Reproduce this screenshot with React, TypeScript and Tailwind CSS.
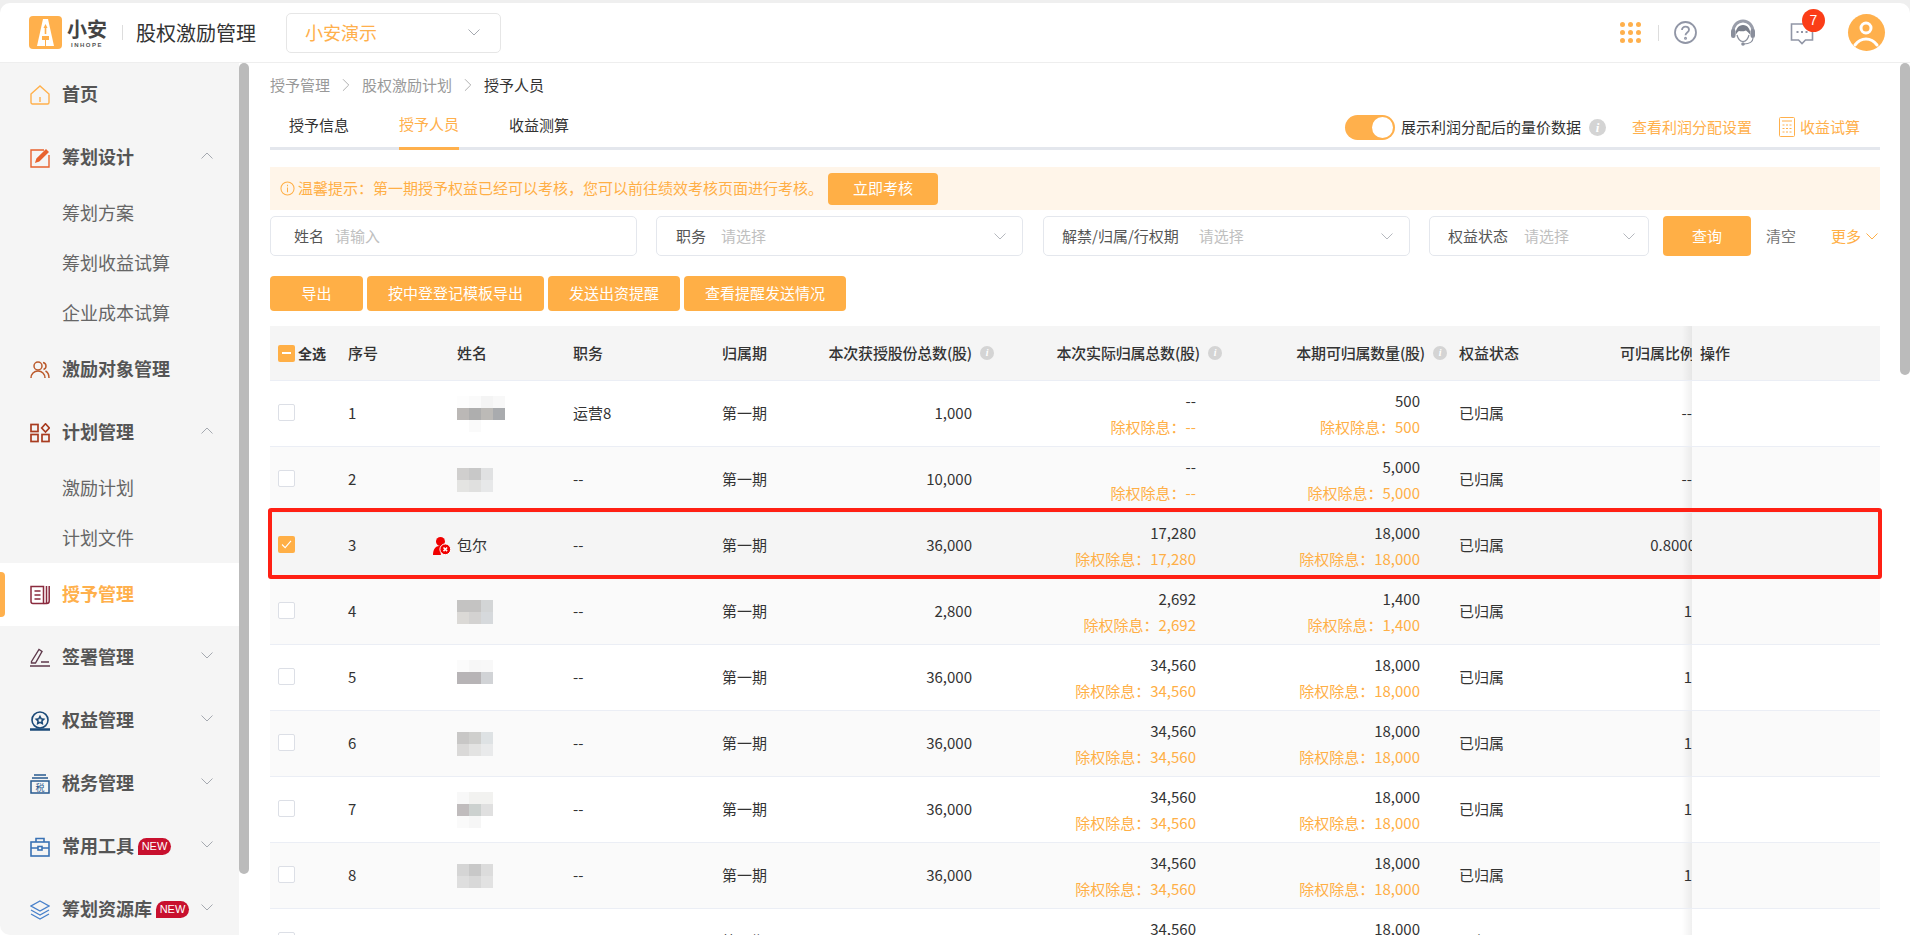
import { ChevronRight } from 'lucide-react';

const Chev = ({ up = false, className = 'text-[#a5a9b0]' }: { up?: boolean; className?: string }) => (
  <svg viewBox="0 0 12 7" className={`w-[12px] h-[7px] shrink-0 ${up ? 'rotate-180' : ''} ${className}`} fill="none" stroke="currentColor" strokeWidth="1">
    <polyline points="0.5,0.5 6,6 11.5,0.5" />
  </svg>
);

const Info = () => (
  <span className="w-[14px] h-[14px] rounded-full bg-[#d4d4d4] text-white text-[10px] leading-[14px] text-center italic font-bold shrink-0 ml-[8px] font-['Liberation_Serif',serif]">i</span>
);

const icons: Record<string, React.ReactNode> = {
  home: (
    <svg viewBox="0 0 20 20" className="w-[20px] h-[20px]" fill="none" stroke="#ffb04c" strokeWidth="1.4">
      <path d="M1 9 10 1l9 8v8.5a1.500 1.500 0 0 1-1.500 1.500h-15A1.500 1.500 0 0 1 1 17.500z" />
      <path d="M10 12v5" />
    </svg>
  ),
  plan: (
    <svg viewBox="0 0 20 20" className="w-[20px] h-[20px]" fill="none" stroke="#e8622e" strokeWidth="1.4">
      <path d="M14 2H1v17h18V7" />
      <path d="M6 14l1-3 9-9 2 2-9 9z" fill="#e8622e" />
    </svg>
  ),
  people: (
    <svg viewBox="0 0 20 20" className="w-[20px] h-[20px]" fill="none" stroke="#bb5a2c" strokeWidth="1.5">
      <circle cx="8" cy="6" r="4" />
      <path d="M1 18c0-4 3-7 7-7s7 3 7 7" />
      <path d="M13 2.500c2 .5 3 2 3 3.500s-1 3-2.500 3.500M15.500 11c2 1 3.500 3.500 3.500 7" />
    </svg>
  ),
  grid: (
    <svg viewBox="0 0 20 20" className="w-[20px] h-[20px]" fill="none" stroke="#a93c20" strokeWidth="1.7">
      <rect x="1" y="1.500" width="7" height="7" />
      <rect x="1" y="11.500" width="7" height="7" />
      <rect x="12" y="11.500" width="7" height="7" />
      <path d="M15.500 .8 19.300 5l-3.800 4L11.700 5z" />
    </svg>
  ),
  book: (
    <svg viewBox="0 0 20 20" className="w-[20px] h-[20px]" fill="none" stroke="#8a2b3e" strokeWidth="1.5">
      <path d="M1 1.500h12.500v17H3a2 2 0 0 1-2-2z" />
      <path d="M16.500 1v17M19.200 1v15c0 1.500-1 2.500-2.500 2.500h-3M4.500 6h6M4.500 10h6M4.500 14h6" />
    </svg>
  ),
  sign: (
    <svg viewBox="0 0 20 20" className="w-[20px] h-[20px]" fill="none" stroke="#5f3a4c" strokeWidth="1.4">
      <path d="M1.500 13.500 9 1.500l3 2-6.500 11.500H1.500zM11 14h8M0 18h20" />
    </svg>
  ),
  badge: (
    <svg viewBox="0 0 20 20" className="w-[20px] h-[20px]" fill="none" stroke="#1b4a78" strokeWidth="1.6">
      <circle cx="10" cy="9" r="8" />
      <path d="M10 5.500l1.200 2.300 2.500.4-1.800 1.800.4 2.500-2.300-1.200-2.300 1.200.4-2.500-1.800-1.800 2.500-.4z" />
      <path d="M0 18.500h20" strokeWidth="2.500" />
    </svg>
  ),
  tax: (
    <svg viewBox="0 0 20 20" className="w-[20px] h-[20px]" fill="none" stroke="#27598f" strokeWidth="1.5">
      <path d="M4 1h12M2 4h16" />
      <rect x="1" y="7" width="18" height="12" />
      <text x="10" y="17" textAnchor="middle" fontSize="9" fill="#27598f" stroke="none">税</text>
    </svg>
  ),
  tool: (
    <svg viewBox="0 0 20 20" className="w-[20px] h-[20px]" fill="none" stroke="#3a72b5" strokeWidth="1.6">
      <rect x="1" y="5" width="18" height="14" />
      <path d="M6 5V1.500h8V5M1 11h18" />
      <rect x="8" y="9.500" width="4" height="3.500" fill="#fff" />
    </svg>
  ),
  layer: (
    <svg viewBox="0 0 20 20" className="w-[20px] h-[20px]" fill="none" stroke="#4a82cb" strokeWidth="1.4">
      <path d="M10 1 19 6l-9 5-9-5zM1 10l9 5 9-5M1 14l9 5 9-5" />
    </svg>
  ),
};

type NavItem = { label: string; icon: string; open?: boolean; closed?: boolean; isNew?: boolean; active?: boolean; subs?: string[]; subClass?: string };

const nav: NavItem[] = [
  { label: '首页', icon: 'home' },
  { label: '筹划设计', icon: 'plan', open: true, subs: ['筹划方案', '筹划收益试算', '企业成本试算'], subClass: 'h-[149px]' },
  { label: '激励对象管理', icon: 'people' },
  { label: '计划管理', icon: 'grid', open: true, subs: ['激励计划', '计划文件'], subClass: 'h-[99px]' },
  { label: '授予管理', icon: 'book', active: true },
  { label: '签署管理', icon: 'sign', closed: true },
  { label: '权益管理', icon: 'badge', closed: true },
  { label: '税务管理', icon: 'tax', closed: true },
  { label: '常用工具', icon: 'tool', closed: true, isNew: true },
  { label: '筹划资源库', icon: 'layer', closed: true, isNew: true },
];

const Sidebar = () => (
  <aside className="w-[250px] shrink-0 flex bg-white overflow-hidden">
    <nav className="w-[239px] shrink-0 bg-[#f5f5f5] rounded-bl-[10px] overflow-hidden">
      {nav.map((item) => (
        <div key={item.label}>
          <div className={`relative h-[63px] flex items-center pl-[30px] ${item.active ? 'bg-white' : ''}`}>
            {item.active && <span className="absolute left-0 top-[9px] w-[5px] h-[45px] bg-[#ffb04c] rounded-r-[4px]" />}
            {icons[item.icon]}
            <span className={`ml-[12px] pb-[2px] text-[18px] font-bold whitespace-nowrap ${item.active ? 'text-[#ffb04c]' : 'text-[#555]'}`}>{item.label}</span>
            {item.isNew && (
              <span className="ml-[4px] w-[33px] h-[17px] rounded-t-[9px] rounded-br-[9px] bg-[#c8102e] text-white text-[11px] leading-[17px] text-center font-['Liberation_Sans',sans-serif]">NEW</span>
            )}
            {(item.open || item.closed) && (
              <span className="absolute left-[201px] pb-[4px]">
                <Chev up={item.open} />
              </span>
            )}
          </div>
          {item.subs && (
            <div className={`flex flex-col ${item.subClass}`}>
              {item.subs.map((s) => (
                <div key={s} className="flex-1 flex items-center pl-[62px] pb-[2px] text-[18px] text-[#666]">{s}</div>
              ))}
            </div>
          )}
        </div>
      ))}
    </nav>
    <div className="w-[10px] shrink-0 bg-white">
      <div className="h-[811px] bg-[#bbb] rounded-[5px]" />
    </div>
  </aside>
);

const Header = () => (
  <header className="h-[60px] shrink-0 flex items-center bg-white rounded-t-[10px] border-b border-[#eee]">
    <svg viewBox="0 0 33 33" className="ml-[29px] w-[33px] h-[33px] shrink-0">
      <rect width="33" height="33" rx="4" fill="#ffb04c" />
      <path d="M14 3h5l6 27H8z" fill="#fff" />
      <path d="M16.500 8l2 4h-1.200v6h-1.600v-6h-1.200zM13 20h7v4h-7z" fill="#ffb04c" />
      <path d="M16 24h1v6h-1z" fill="#ffb04c" />
    </svg>
    <div className="ml-[5px] w-[40px] flex flex-col items-center text-[#444]">
      <span className="text-[20px] font-bold leading-[24px] whitespace-nowrap">小安</span>
      <span className="text-[6px] leading-[8px] tracking-[1.5px] font-bold text-[#555] font-['Liberation_Sans',sans-serif]">INHOPE</span>
    </div>
    <span className="ml-[15px] w-px h-[15px] bg-[#ddd]" />
    <span className="ml-[13px] text-[20px] text-[#333] whitespace-nowrap">股权激励管理</span>
    <div className="ml-[30px] w-[215px] h-[40px] border border-[#e6e6e6] rounded-[5px] flex items-center pl-[18px] pr-[20px] justify-between">
      <span className="text-[18px] text-[#ffb04c]">小安演示</span>
      <Chev />
    </div>
    <div className="ml-auto flex items-center">
      <div className="grid grid-cols-3 gap-[3px]">
        {Array.from({ length: 9 }).map((_, i) => (
          <span key={i} className="w-[5px] h-[5px] rounded-full bg-[#ffb04c]" />
        ))}
      </div>
      <span className="ml-[17px] w-px h-[16px] bg-[#ddd]" />
      <svg viewBox="0 0 23 23" className="ml-[15px] w-[23px] h-[23px]" fill="none" stroke="#9196a6" strokeWidth="1.8">
        <circle cx="11.500" cy="11.500" r="10.500" />
        <path d="M8 9c0-2 1.500-3.300 3.500-3.300s3.500 1.300 3.500 3c0 2.800-3.500 2.800-3.500 5.600" />
        <circle cx="11.500" cy="17.300" r=".6" />
      </svg>
      <svg viewBox="0 0 26 28" className="ml-[33px] w-[26px] h-[28px]" fill="none">
        <path d="M3 13C3 6.500 7.500 2 13 2s10 4.500 10 11" stroke="#9a9eaa" strokeWidth="3" />
        <path d="M5.500 16c0-6 3-10 7.500-10s7.500 4 7.500 10c-1.500-2-3-3.500-4.500-4.500-2 1-5.500 1-7 .5-1.500 1-2.500 2.500-3.500 4z" fill="#7a7f8b" />
        <path d="M7 16c1 4 3.500 6.500 6 6.500s5-2.500 6-6.500" stroke="#8a8f9c" strokeWidth="1.200" />
        <rect x="1" y="10" width="4.500" height="9" rx="2.200" fill="#8a8f9c" />
        <rect x="20.500" y="10" width="4.500" height="9" rx="2.200" fill="#8a8f9c" />
        <path d="M23 19c0 3.500-3.500 6-9 6" stroke="#8a8f9c" strokeWidth="1.200" />
        <circle cx="13" cy="25" r="1.800" fill="#8a8f9c" />
      </svg>
      <div className="relative ml-[34px] w-[24px] h-[24px]">
        <svg viewBox="0 0 24 24" className="w-[24px] h-[24px]" fill="none" stroke="#9196a6" strokeWidth="1.600">
          <path d="M1.500 3h21v16h-7l-3.500 3.500L8.500 19h-7z" />
          <path d="M6.500 11h2M11 11h2M15.500 11h2" strokeWidth="2" />
        </svg>
        <span className="absolute -top-[12px] left-[12px] w-[23px] h-[23px] rounded-full bg-[#fb3d17] text-white text-[14px] leading-[23px] text-center font-['Liberation_Sans',sans-serif]">7</span>
      </div>
      <div className="ml-[34px] mr-[25px] w-[37px] h-[37px] rounded-full bg-[#ffb04c] overflow-hidden">
        <svg viewBox="0 0 37 37" className="w-[37px] h-[37px]" fill="none" stroke="#fff" strokeWidth="3">
          <circle cx="18" cy="14" r="5" />
          <path d="M7 31c3-4 7-6 11-6s8 2 11 6" strokeLinecap="round" />
        </svg>
      </div>
    </div>
  </header>
);

const ActionBtn = ({ children, className }: { children: string; className: string }) => (
  <button className={`h-[35px] bg-[#ffaf46] rounded-[4px] text-white text-[15px] ${className}`}>{children}</button>
);

const Field = ({ label, value, className, labelClass, select = true }: { label: string; value: string; className: string; labelClass: string; select?: boolean }) => (
  <div className={`h-[40px] border border-[#e4e7ed] rounded-[5px] flex items-center text-[15px] ${className}`}>
    <span className={`text-[#555] whitespace-nowrap ${labelClass}`}>{label}</span>
    <span className="text-[#c0c0c0]">{value}</span>
    {select && <span className="ml-auto"><Chev className="text-[#b5b8be]" /></span>}
  </div>
);

const cols = 'grid grid-cols-[78px_109px_116px_149px_100px_180px_229px_219px_160px_82px_188px]';

type Row = { no: number; job: string; total: string; actual: string; can: string; ratio: string; mosaic: string[][]; name?: string };

const rows: Row[] = [
  { no: 1, job: '运营8', total: '1,000', actual: '--', can: '500', ratio: '--', mosaic: [['bg-[#fdfdfd]', 'bg-[#fafafa]', 'bg-[#f4f4f4]', 'bg-[#f8f8f8]'], ['bg-[#bbb8b6]', 'bg-[#aeaeae]', 'bg-[#bcbab7]', 'bg-[#a9abae]'], ['bg-white', 'bg-[#fafafa]', 'bg-white', 'bg-white']] },
  { no: 2, job: '--', total: '10,000', actual: '--', can: '5,000', ratio: '--', mosaic: [['bg-[#d0cfce]', 'bg-[#c8c8c8]', 'bg-[#e0e1e2]'], ['bg-[#e4e4e2]', 'bg-[#e0e0df]', 'bg-[#e7e8e9]']] },
  { no: 3, job: '--', total: '36,000', actual: '17,280', can: '18,000', ratio: '0.8000', mosaic: [], name: '包尔' },
  { no: 4, job: '--', total: '2,800', actual: '2,692', can: '1,400', ratio: '1', mosaic: [['bg-[#c4c3c2]', 'bg-[#c4c3c2]', 'bg-[#d3d5d6]'], ['bg-[#dbd9d6]', 'bg-[#d3d2d1]', 'bg-[#d6d9dc]']] },
  { no: 5, job: '--', total: '36,000', actual: '34,560', can: '18,000', ratio: '1', mosaic: [['bg-[#fbfbfb]', 'bg-[#f7f7f7]', 'bg-[#f8f8f8]'], ['bg-[#b7b4b6]', 'bg-[#b7b4b6]', 'bg-[#d1d3d6]'], ['bg-white', 'bg-white', 'bg-white']] },
  { no: 6, job: '--', total: '36,000', actual: '34,560', can: '18,000', ratio: '1', mosaic: [['bg-[#c8c7c6]', 'bg-[#cfcfcd]', 'bg-[#dee2e4]'], ['bg-[#dad9d8]', 'bg-[#e3e3e2]', 'bg-[#e9eaeb]']] },
  { no: 7, job: '--', total: '36,000', actual: '34,560', can: '18,000', ratio: '1', mosaic: [['bg-[#f8f8f8]', 'bg-[#f2f2f0]', 'bg-[#f2f2f0]'], ['bg-[#c0bcbd]', 'bg-[#ccd1cf]', 'bg-[#e0e0e0]'], ['bg-[#fafafa]', 'bg-[#f6f6f6]', 'bg-white']] },
  { no: 8, job: '--', total: '36,000', actual: '34,560', can: '18,000', ratio: '1', mosaic: [['bg-[#d5d5d5]', 'bg-[#c8c8c8]', 'bg-[#dcdcdc]'], ['bg-[#dedede]', 'bg-[#d8d8d8]', 'bg-[#e2e2e2]']] },
  { no: 9, job: '--', total: '36,000', actual: '34,560', can: '18,000', ratio: '1', mosaic: [] },
];

const Box = ({ mode }: { mode?: 'checked' | 'half' }) => (
  <span className={`w-[17px] h-[17px] rounded-[2px] flex items-center justify-center shrink-0 ${mode ? 'bg-[#ffaf46]' : 'bg-white border border-[#dcdfe6]'}`}>
    {mode === 'half' && <span className="w-[9px] h-[2px] bg-white" />}
    {mode === 'checked' && (
      <svg viewBox="0 0 12 10" className="w-[11px] h-[9px]" fill="none" stroke="#fff" strokeWidth="1.200">
        <path d="M1 5l3.500 3.500L11 1" />
      </svg>
    )}
  </span>
);

const Amount = ({ value, className }: { value: string; className: string }) => (
  <div className={`flex flex-col justify-center text-right leading-[26px] ${className}`}>
    <span className="text-[#333]">{value}</span>
    <span className="text-[#ffaf46]">除权除息：{value}</span>
  </div>
);

const HeadCell = ({ children, className }: { children: string; className: string }) => (
  <div className={`flex items-center justify-end whitespace-nowrap tracking-[-0.2px] ${className}`}>
    {children}
    <Info />
  </div>
);

// fixed 操作 column: fade drawn just left of its edge, over the column it covers
const FixedCell = ({ children }: { children?: string }) => (
  <div className="relative flex items-center pl-[8px]">
    <span className="absolute right-full top-0 bottom-0 w-[10px] bg-gradient-to-l from-black/[0.06] to-transparent" />
    {children}
  </div>
);

const Table = () => (
  <div className="mt-[15px] text-[15px] text-[#333]">
    <div className={`${cols} h-[55px] bg-[#f5f5f5] border-b border-[#ebeef5] font-medium`}>
      <div className="flex items-center pl-[8px]">
        <Box mode="half" />
        <span className="ml-[3px] text-[14px] font-bold">全选</span>
      </div>
      <div className="flex items-center">序号</div>
      <div className="flex items-center">姓名</div>
      <div className="flex items-center">职务</div>
      <div className="flex items-center">归属期</div>
      <HeadCell className="pr-[8px]">本次获授股份总数(股)</HeadCell>
      <HeadCell className="pr-[9px]">本次实际归属总数(股)</HeadCell>
      <HeadCell className="pr-[3px]">本期可归属数量(股)</HeadCell>
      <div className="flex items-center pl-[9px]">权益状态</div>
      <div className="flex items-center justify-end overflow-hidden whitespace-nowrap"><span className="-mr-[3px]">可归属比例</span></div>
      <FixedCell>操作</FixedCell>
    </div>
    {rows.map((r) => (
      <div
        key={r.no}
        className={`${cols} relative h-[66px] border-b border-[#ebeef5] ${r.no === 3 ? 'bg-[#f5f5f5]' : r.no % 2 === 0 ? 'bg-[#fafafa]' : 'bg-white'}`}
      >
        <div className="flex items-center pl-[8px] pb-[2px]">
          <Box mode={r.no === 3 ? 'checked' : undefined} />
        </div>
        <div className="flex items-center">{r.no}</div>
        <div className="flex items-center">
          {r.name ? (
            <div className="flex items-center -ml-[24px]">
              <svg viewBox="0 0 18 18" className="w-[18px] h-[18px] mr-[6px]">
                <circle cx="7.500" cy="4.500" r="4.500" fill="#f00000" />
                <path d="M0 18c0-6 3-9 6-9h3c2 0 3 1 4 2-4 1-6 4-5 7z" fill="#f00000" />
                <circle cx="12.300" cy="12.300" r="5.400" fill="#f00000" stroke="#fff" />
                <path d="M10.500 10.500l3.600 3.600m0-3.600l-3.600 3.600" stroke="#fff" strokeWidth="1.500" />
              </svg>
              {r.name}
            </div>
          ) : (
            <div className="flex flex-col">
              {r.mosaic.map((line, i) => (
                <div key={i} className="flex">
                  {line.map((c, j) => (
                    <span key={j} className={`w-[12px] h-[12px] ${c}`} />
                  ))}
                </div>
              ))}
            </div>
          )}
        </div>
        <div className="flex items-center">{r.job}</div>
        <div className="flex items-center">第一期</div>
        <div className="flex items-center justify-end pr-[30px]">{r.total}</div>
        <Amount value={r.actual} className="pr-[35px]" />
        <Amount value={r.can} className="pr-[30px]" />
        <div className="flex items-center pl-[9px]">已归属</div>
        <div className="flex items-center justify-end overflow-hidden"><span className={r.ratio.length > 2 ? '-mr-[4px]' : ''}>{r.ratio}</span></div>
        <FixedCell />
        {r.no === 3 && <div className="absolute -top-[5px] -bottom-[1px] -left-[2px] -right-[2px] border-4 border-[#ff2014] rounded-[3px] z-10" />}
      </div>
    ))}
  </div>
);

const Main = () => (
  <main className="flex-1 min-w-0 bg-white flex overflow-hidden">
    <div className="flex-1 min-w-0 px-[20px]">
      <div className="h-[44px] flex items-center text-[15px] text-[#999]">
        <span>授予管理</span>
        <ChevronRight size={22} strokeWidth={1} className="mx-[5px] text-[#aaa]" />
        <span>股权激励计划</span>
        <ChevronRight size={22} strokeWidth={1} className="mx-[5px] text-[#aaa]" />
        <span className="text-[#333]">授予人员</span>
      </div>
      <div className="h-[43px] flex border-b-[3px] border-[#e4e7ed] text-[15px]">
        <div className="flex gap-[50px] ml-[19px] h-[43px]">
          <span className="h-[43px] pb-[6px] flex items-center text-[#333]">授予信息</span>
          <span className="h-[43px] pb-[6px] flex items-center text-[#ffb04c] border-b-[3px] border-[#ffb04c]">授予人员</span>
          <span className="h-[43px] pb-[6px] flex items-center text-[#333]">收益测算</span>
        </div>
        <div className="ml-auto flex items-center pr-[20px]">
          <span className="w-[50px] h-[25px] rounded-full bg-[#ffb04c] flex items-center justify-end pr-[2px]">
            <span className="w-[21px] h-[21px] rounded-full bg-white" />
          </span>
          <span className="ml-[6px] text-[#333]">展示利润分配后的量价数据</span>
          <span className="w-[17px] h-[17px] ml-[8px] rounded-full bg-[#d4d4d4] text-white text-[13px] leading-[17px] text-center italic font-bold font-['Liberation_Serif',serif]">i</span>
          <span className="ml-[26px] text-[#ffb04c]">查看利润分配设置</span>
          <svg viewBox="0 0 16 20" className="ml-[27px] w-[16px] h-[20px]" fill="none" stroke="#ffb04c" strokeWidth="1">
            <rect x=".5" y=".5" width="15" height="19" rx="1" />
            <path d="M3 4h10M3.500 8h2M7 8h2M10.500 8h2M3.500 11.500h2M7 11.500h2M10.500 11.500h2M3.500 15h2M7 15h2M10.500 15h2" />
          </svg>
          <span className="ml-[5px] text-[#ffb04c]">收益试算</span>
        </div>
      </div>
      <div className="mt-[17px] h-[43px] bg-[#fff5e9] flex items-center pl-[10px] text-[15px] text-[#ffaf46]">
        <svg viewBox="0 0 16 16" className="w-[15px] h-[15px] shrink-0" fill="none" stroke="#ffaf46" strokeWidth="1.100">
          <circle cx="8" cy="8" r="7" />
          <path d="M8 7v5M8 4v1.500" />
        </svg>
        <span className="ml-[3px]">温馨提示：第一期授予权益已经可以考核，您可以前往绩效考核页面进行考核。</span>
        <button className="ml-[5px] w-[110px] h-[32px] bg-[#ffaf46] rounded-[4px] text-white">立即考核</button>
      </div>
      <div className="mt-[6px] h-[40px] flex items-center">
        <Field label="姓名" value="请输入" className="w-[367px] pl-[23px]" labelClass="mr-[11px]" select={false} />
        <Field label="职务" value="请选择" className="ml-[19px] w-[367px] pl-[19px] pr-[16px]" labelClass="mr-[15px]" />
        <Field label="解禁/归属/行权期" value="请选择" className="ml-[20px] w-[367px] pl-[18px] pr-[16px]" labelClass="mr-[20px]" />
        <Field label="权益状态" value="请选择" className="ml-[19px] w-[220px] pl-[18px] pr-[13px]" labelClass="mr-[16px]" />
        <button className="ml-[14px] w-[88px] h-[40px] bg-[#ffaf46] rounded-[4px] text-white text-[15px]">查询</button>
        <span className="ml-[15px] text-[15px] text-[#777]">清空</span>
        <span className="ml-[35px] text-[15px] text-[#ffaf46]">更多</span>
        <span className="ml-[5px]"><Chev className="text-[#ffaf46]" /></span>
      </div>
      <div className="mt-[20px] flex gap-[4px]">
        <ActionBtn className="w-[93px]">导出</ActionBtn>
        <ActionBtn className="w-[177px]">按中登登记模板导出</ActionBtn>
        <ActionBtn className="w-[132px]">发送出资提醒</ActionBtn>
        <ActionBtn className="w-[162px]">查看提醒发送情况</ActionBtn>
      </div>
      <Table />
    </div>
    <div className="w-[10px] shrink-0">
      <div className="h-[312px] bg-[#bbb] rounded-[5px]" />
    </div>
  </main>
);

export default function App() {
  return (
    <div className="w-[1910px] h-[935px] overflow-hidden flex flex-col bg-[#efefef] pt-[3px] font-['Noto_Sans_CJK_SC','Liberation_Sans',sans-serif]">
      <Header />
      <div className="flex-1 min-h-0 flex">
        <Sidebar />
        <Main />
      </div>
    </div>
  );
}
